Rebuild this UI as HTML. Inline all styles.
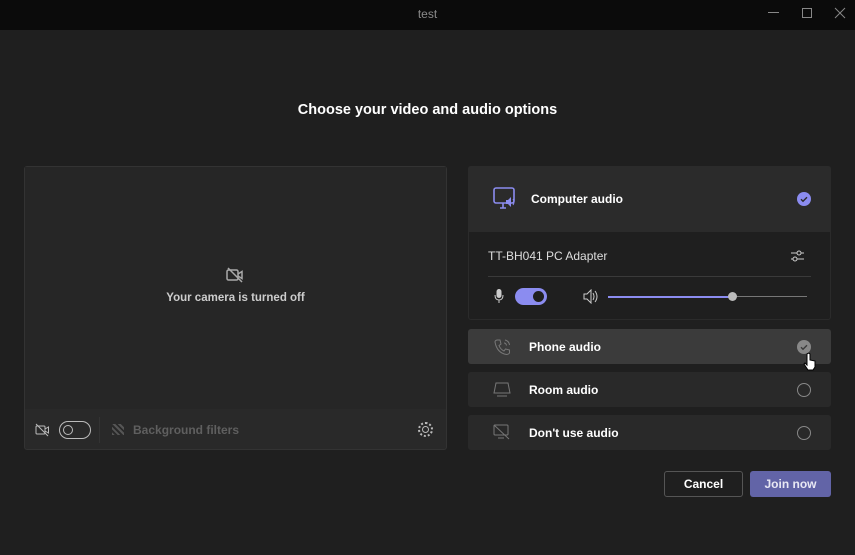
<!DOCTYPE html><html><head><style>
*{margin:0;padding:0;box-sizing:border-box}
body{width:855px;height:555px;background:#1f1f1f;font-family:"Liberation Sans",sans-serif;position:relative;overflow:hidden;color:#fff}
.a{position:absolute}
.t{font-size:13px;font-weight:bold}
</style></head><body>
<div class="a" style="left:0;top:0;width:855px;height:30px;background:#0b0b0b"></div>
<div class="a" style="left:0;top:7px;width:855px;text-align:center;font-size:12px;color:#8a8a8a">test</div>
<div class="a" style="left:768px;top:12px;width:11px;height:1px;background:#888"></div>
<div class="a" style="left:802px;top:8px;width:10px;height:10px;border:1px solid #888"></div>
<svg class="a" style="left:834px;top:7px" width="12" height="12"><path d="M1 1L11 11M11 1L1 11" stroke="#888" stroke-width="1"/></svg>
<div class="a" style="left:0;top:102px;width:855px;text-align:center;font-size:14.5px;font-weight:bold">Choose your video and audio options</div>

<div class="a" style="left:24px;top:166px;width:423px;height:284px;background:#292929;border-radius:3px;border:1px solid #333"></div>
<div class="a" style="left:25px;top:167px;width:421px;height:242px;background:#262626"></div>
<svg class="a" style="left:226px;top:267px" width="18" height="16" viewBox="0 0 18 16"><rect x="1" y="3" width="11" height="10" rx="1.5" fill="none" stroke="#aaa" stroke-width="1.5"/><path d="M12 7l4-2.5v7L12 9" fill="none" stroke="#aaa" stroke-width="1.5"/><path d="M2 1L16 15" stroke="#aaa" stroke-width="1.5"/></svg>
<div class="a t" style="left:25px;top:292px;width:421px;text-align:center;font-size:11.5px;color:#ccc">Your camera is turned off</div>
<svg class="a" style="left:35px;top:423px" width="15" height="14" viewBox="0 0 15 14"><rect x="1" y="3" width="9" height="8" rx="1" fill="none" stroke="#bbb"/><path d="M10 6l3.5-2v6L10 8M1 1l12 12" fill="none" stroke="#bbb"/></svg>
<div class="a" style="left:59px;top:421px;width:32px;height:18px;border:1.5px solid #bbb;border-radius:9px"></div>
<div class="a" style="left:63px;top:425px;width:10px;height:10px;border:1.5px solid #bbb;border-radius:50%"></div>
<div class="a" style="left:99px;top:417px;width:1px;height:26px;background:#333"></div>
<div class="a" style="left:112px;top:424px;width:12px;height:11px;background:repeating-linear-gradient(45deg,#555 0 2px,transparent 2px 4px)"></div>
<div class="a t" style="left:133px;top:423px;font-size:12px;color:#5f5f5f">Background filters</div>
<div class="a" style="left:418px;top:422px;width:15px;height:15px;border:2px dotted #bbb;border-radius:50%"></div>
<div class="a" style="left:422px;top:426px;width:7px;height:7px;border:1.5px solid #bbb;border-radius:50%"></div>

<div class="a" style="left:468px;top:166px;width:363px;height:154px;background:#1f1f1f;border:1px solid #2b2b2b;border-radius:3px"></div>
<div class="a" style="left:468px;top:166px;width:363px;height:66px;background:#2b2b2b;border-radius:3px 3px 0 0"></div>
<svg class="a" style="left:493px;top:187px" width="24" height="24" viewBox="0 0 24 24"><rect x="1" y="1" width="20" height="15" rx="2" fill="none" stroke="#8b8cf0" stroke-width="1.6"/><path d="M7 21h6M10 16v5" stroke="#8b8cf0" stroke-width="1.6"/><path d="M13 13h2l3-3v10l-3-3h-2z" fill="#8b8cf0"/><path d="M20 12q2 3 0 6" stroke="#8b8cf0" fill="none"/></svg>
<div class="a t" style="left:531px;top:192px;font-size:12px">Computer audio</div>
<div class="a" style="left:797px;top:192px;width:14px;height:14px;border-radius:50%;background:#8b8cf0"></div>
<svg class="a" style="left:797px;top:192px" width="14" height="14"><path d="M4 7.2l2 2 4-4" stroke="#2b2b2b" stroke-width="1.4" fill="none"/></svg>
<div class="a" style="left:488px;top:249px;font-size:12px;color:#ddd">TT-BH041 PC Adapter</div>
<svg class="a" style="left:790px;top:249px" width="15" height="14"><path d="M1 4h13M1 10h13" stroke="#ccc"/><circle cx="9" cy="4" r="2" fill="#1f1f1f" stroke="#ccc"/><circle cx="5" cy="10" r="2" fill="#1f1f1f" stroke="#ccc"/></svg>
<div class="a" style="left:488px;top:276px;width:323px;height:1px;background:#3a3a3a"></div>
<svg class="a" style="left:494px;top:289px" width="10" height="15"><rect x="2.5" y="0" width="5" height="9" rx="2.5" fill="#ccc"/><path d="M1 6q0 5 4 5t4-5M5 11v3" stroke="#ccc" fill="none"/></svg>
<div class="a" style="left:515px;top:288px;width:32px;height:17px;background:#8b8cf0;border-radius:9px"></div>
<div class="a" style="left:533px;top:291px;width:11px;height:11px;background:#1f1f1f;border-radius:50%"></div>
<svg class="a" style="left:583px;top:289px" width="15" height="15"><path d="M1 5h3l4-4v13l-4-4H1z" fill="none" stroke="#ccc"/><path d="M10 4q2 3.5 0 7M12 2q4 5.5 0 11" stroke="#ccc" fill="none"/></svg>
<div class="a" style="left:608px;top:296px;width:124px;height:2px;background:#8b8cf0"></div>
<div class="a" style="left:732px;top:296px;width:75px;height:1px;background:#777"></div>
<div class="a" style="left:728px;top:292px;width:9px;height:9px;background:#bbb;border-radius:50%"></div>

<div class="a" style="left:468px;top:329px;width:363px;height:35px;background:#3b3b3b;border-radius:3px"></div>
<svg class="a" style="left:493px;top:338px" width="18" height="18"><path d="M4 2l3 0 1 4-2 1.5q1.5 4 5 5.5l1.5-2 4 1v3q-1 1.5-3 1.5Q4 15 2 4q0-1.5 2-2z" fill="none" stroke="#777"/><path d="M11 5q2 0 2.5 2.5M12 2q4 1 4.5 5" stroke="#777" fill="none"/></svg>
<div class="a t" style="left:529px;top:340px;font-size:12px">Phone audio</div>
<div class="a" style="left:797px;top:340px;width:14px;height:14px;border-radius:50%;background:#888"></div>
<svg class="a" style="left:797px;top:340px" width="14" height="14"><path d="M4 7.2l2 2 4-4" stroke="#3b3b3b" stroke-width="1.4" fill="none"/></svg>
<svg class="a" style="left:803px;top:352px" width="14" height="20"><path d="M4 2q1.5-1.5 3 0v6l5 1v6l-2 3H5L1 12l1-1 2 2z" fill="#fff" stroke="#000"/></svg>

<div class="a" style="left:468px;top:372px;width:363px;height:35px;background:#292929;border-radius:3px"></div>
<svg class="a" style="left:493px;top:382px" width="18" height="15"><path d="M3 1h12l2 10H1z" fill="none" stroke="#777"/><path d="M4 14h10" stroke="#777"/></svg>
<div class="a t" style="left:529px;top:383px;font-size:12px">Room audio</div>
<div class="a" style="left:797px;top:383px;width:14px;height:14px;border-radius:50%;border:1px solid #888"></div>

<div class="a" style="left:468px;top:415px;width:363px;height:35px;background:#292929;border-radius:3px"></div>
<svg class="a" style="left:493px;top:424px" width="17" height="16"><rect x="1" y="1" width="14" height="10" rx="1" fill="none" stroke="#777"/><path d="M5 14h6M1 1l15 14" stroke="#777"/></svg>
<div class="a t" style="left:529px;top:426px;font-size:12px">Don't use audio</div>
<div class="a" style="left:797px;top:426px;width:14px;height:14px;border-radius:50%;border:1px solid #888"></div>

<div class="a t" style="left:664px;top:471px;width:79px;height:26px;border:1px solid #555;border-radius:3px;text-align:center;line-height:24px;font-size:12px">Cancel</div>
<div class="a t" style="left:750px;top:471px;width:81px;height:26px;background:#6264a7;border-radius:3px;text-align:center;line-height:26px;font-size:12px;color:#e8e8f4">Join now</div>
</body></html>
